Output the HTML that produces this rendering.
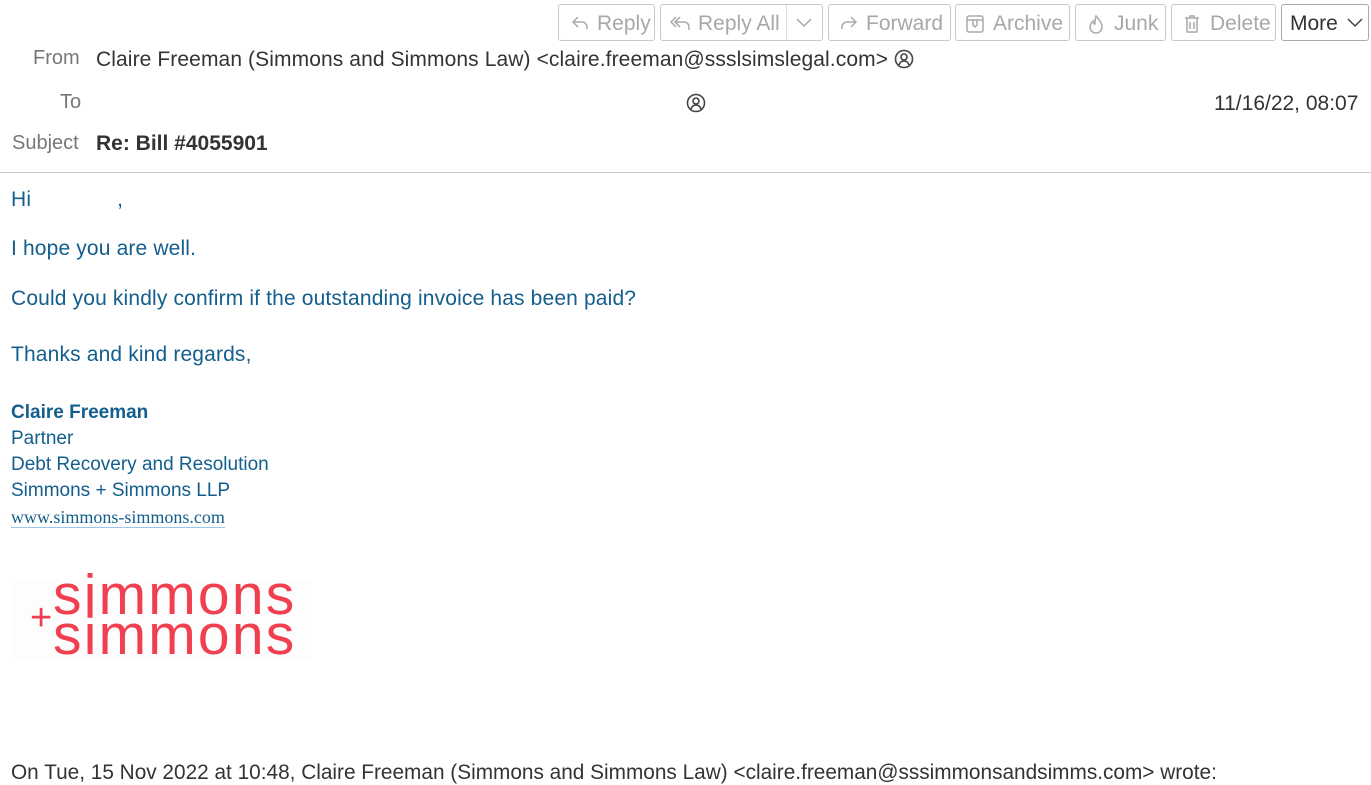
<!DOCTYPE html>
<html><head><meta charset="utf-8"><style>
body{margin:0;width:1371px;height:777px;overflow:hidden;background:#fff;font-family:"Liberation Sans",sans-serif;position:relative}
.a{position:absolute;white-space:nowrap}
.btn{position:absolute;top:4px;height:35px;border:1px solid #c8c8c8;border-radius:3px;background:#fff;color:#a8a8a8;font-size:21px;line-height:37px;box-sizing:content-box}
.btn svg{position:absolute;top:9px}
.lbl{color:#777;font-size:20px}
.hd{color:#333;font-size:21px}
.b{color:#135e8c;font-size:21px;letter-spacing:0.15px}
.s{color:#135e8c;font-size:19px;letter-spacing:0px}
</style></head><body>
<div class="btn" style="left:558px;width:95px"><svg style="left:11px" width="20" height="18" viewBox="0 0 20 18" fill="none" stroke="#aaa" stroke-width="1.5"><path d="M8 3L3 8l5 5M3 8h9a5 5 0 0 1 5 5v2"/></svg><span style="position:absolute;left:38px">Reply</span></div>
<div class="btn" style="left:660px;width:161px"><svg style="left:8px" width="24" height="20" viewBox="0 0 24 20" fill="none" stroke="#aaa" stroke-width="1.5"><path d="M7 3L2 8l5 5M11 3L6 8l5 5M6 8h9a5 5 0 0 1 5 5v3"/></svg><span style="position:absolute;left:37px">Reply All</span><div style="position:absolute;left:125px;top:0;width:1px;height:35px;background:#ddd"></div><svg style="left:134px;top:12px" width="18" height="12" viewBox="0 0 18 12" fill="none" stroke="#aaa" stroke-width="1.5"><path d="M2 2l7 7 7-7"/></svg></div>
<div class="btn" style="left:828px;width:121px"><svg style="left:10px" width="20" height="18" viewBox="0 0 20 18" fill="none" stroke="#aaa" stroke-width="1.5"><path d="M12 3l5 5-5 5M17 8H8a5 5 0 0 0-5 5v2"/></svg><span style="position:absolute;left:37px">Forward</span></div>
<div class="btn" style="left:955px;width:113px"><svg style="left:9px" width="20" height="20" viewBox="0 0 20 20" fill="none" stroke="#aaa" stroke-width="1.5"><rect x="2" y="2" width="16" height="16" rx="2"/><path d="M2 6h16M8 6v5l2 2 2-2V6"/></svg><span style="position:absolute;left:37px">Archive</span></div>
<div class="btn" style="left:1075px;width:89px"><svg style="left:10px" width="20" height="20" viewBox="0 0 20 20" fill="none" stroke="#aaa" stroke-width="1.5"><path d="M10 2c3 4 6 6 6 11a6 6 0 0 1-12 0c0-3 2-5 3-6 0 2 1 3 2 3 0-3 0-5 1-8z"/></svg><span style="position:absolute;left:38px">Junk</span></div>
<div class="btn" style="left:1171px;width:103px"><svg style="left:10px" width="20" height="20" viewBox="0 0 20 20" fill="none" stroke="#aaa" stroke-width="1.5"><path d="M3 4h14M8 4V2h4v2M5 4v14h10V4M8 8v7M12 8v7"/></svg><span style="position:absolute;left:38px">Delete</span></div>
<div class="btn" style="left:1281px;width:86px;color:#333;border-color:#aaa"><span style="position:absolute;left:8px">More</span><svg style="left:64px;top:12px" width="18" height="12" viewBox="0 0 18 12" fill="none" stroke="#444" stroke-width="1.5"><path d="M2 2l7 7 7-7"/></svg></div>

<div class="a lbl" style="left:33px;top:47px">From</div>
<div class="a hd" style="left:96px;top:48px;letter-spacing:0.1px">Claire Freeman (Simmons and Simmons Law) &lt;claire.freeman@ssslsimslegal.com&gt;</div>
<svg class="a" style="left:894px;top:49px" width="20" height="20" viewBox="0 0 20 20" fill="none" stroke="#444" stroke-width="1.6"><circle cx="10" cy="10" r="8.5"/><circle cx="10" cy="8" r="3"/><path d="M5 16c1-3 3-4 5-4s4 1 5 4"/></svg>
<div class="a lbl" style="left:60px;top:91px">To</div>
<svg class="a" style="left:686px;top:93px" width="20" height="20" viewBox="0 0 20 20" fill="none" stroke="#444" stroke-width="1.6"><circle cx="10" cy="10" r="8.5"/><circle cx="10" cy="8" r="3"/><path d="M5 16c1-3 3-4 5-4s4 1 5 4"/></svg>
<div class="a hd" style="left:1214px;top:92px">11/16/22, 08:07</div>
<div class="a lbl" style="left:12px;top:132px">Subject</div>
<div class="a hd" style="left:96px;top:132px;font-weight:bold">Re: Bill #4055901</div>
<div class="a" style="left:0;top:172px;width:1371px;height:1px;background:#ccc"></div>

<div class="a b" style="left:11px;top:188px">Hi <span style="margin-left:80px">,</span></div>
<div class="a b" style="left:11px;top:237px">I hope you are well.</div>
<div class="a b" style="left:11px;top:287px">Could you kindly confirm if the outstanding invoice has been paid?</div>
<div class="a b" style="left:11px;top:343px">Thanks and kind regards,</div>

<div class="a s" style="left:11px;top:402px;font-weight:bold">Claire Freeman</div>
<div class="a s" style="left:11px;top:428px">Partner</div>
<div class="a s" style="left:11px;top:454px">Debt Recovery and Resolution</div>
<div class="a s" style="left:11px;top:480px">Simmons + Simmons LLP</div>
<div class="a" style="left:11px;top:508px;font-family:'Liberation Serif',serif;font-size:18px;color:#135e8c;border-bottom:1.5px solid #9cc6e8;line-height:19px">www.simmons-simmons.com</div>

<div class="a" style="left:12px;top:580px;width:300px;height:80px;background:#fdfdfd"></div>
<div class="a" style="left:53px;top:575px;font-size:57px;color:#f0404f;letter-spacing:2.2px;line-height:40px">simmons<br>simmons</div>
<div class="a" style="left:30px;top:599px;font-size:38px;color:#f0404f;line-height:38px">+</div>

<div class="a" style="left:11px;top:761px;font-size:20.8px;color:#333">On Tue, 15 Nov 2022 at 10:48, Claire Freeman (Simmons and Simmons Law) &lt;claire.freeman@sssimmonsandsimms.com&gt; wrote:</div>
</body></html>
